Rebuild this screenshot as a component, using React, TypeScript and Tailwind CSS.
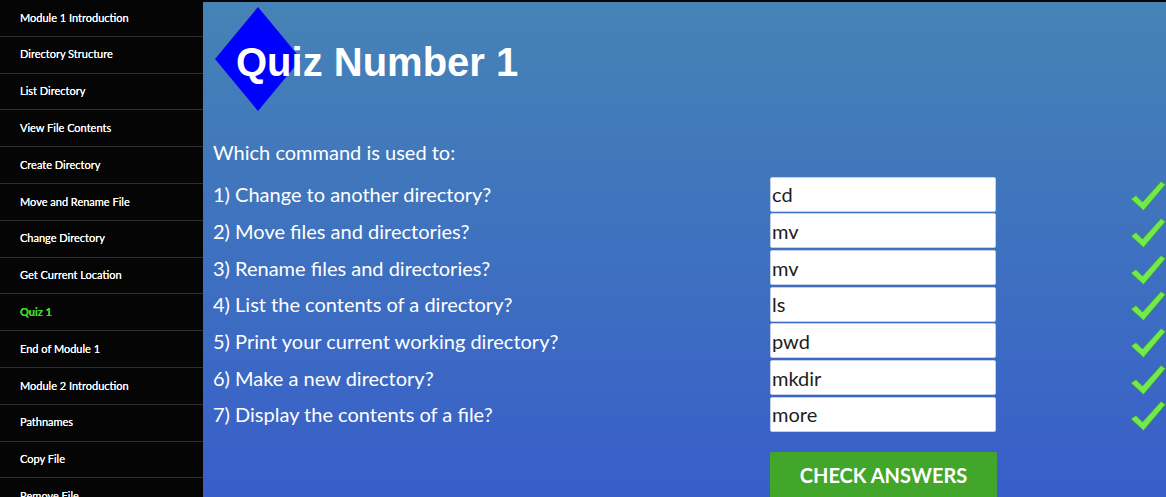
import React from 'react'

const lessons = [
  'Module 1 Introduction',
  'Directory Structure',
  'List Directory',
  'View File Contents',
  'Create Directory',
  'Move and Rename File',
  'Change Directory',
  'Get Current Location',
  'Quiz 1',
  'End of Module 1',
  'Module 2 Introduction',
  'Pathnames',
  'Copy File',
  'Remove File',
]

const questions = [
  { q: '1) Change to another directory?', a: 'cd' },
  { q: '2) Move files and directories?', a: 'mv' },
  { q: '3) Rename files and directories?', a: 'mv' },
  { q: '4) List the contents of a directory?', a: 'ls' },
  { q: '5) Print your current working directory?', a: 'pwd' },
  { q: '6) Make a new directory?', a: 'mkdir' },
  { q: '7) Display the contents of a file?', a: 'more' },
]

function Tick() {
  return (
    <svg width="36" height="32" viewBox="0 0 36 32" className="block">
      <path
        d="M1 19 L6 15.5 L12.5 22 L31 1.5 L35.5 4.5 L13.5 30.5 Z"
        fill="#72ea4e"
        stroke="#3f9a2c"
        strokeWidth="0.8"
        strokeLinejoin="round"
      />
    </svg>
  )
}

export default function App() {
  return (
    <div className="flex h-[497px] w-[1166px] overflow-hidden bg-[#050505] font-['Lato','Open_Sans',sans-serif]">
      {/* sidebar */}
      <nav className="w-[203px] shrink-0 bg-[#050505]">
        {lessons.map((l) => (
          <div
            key={l}
            className={`flex h-[36.8px] items-center border-b border-[#2f2f2f] pl-5 text-[11px] [text-shadow:0_0_0.4px_currentColor] ${
              l === 'Quiz 1' ? 'font-bold text-[#3fd82c]' : 'font-normal text-white'
            }`}
          >
            {l}
          </div>
        ))}
      </nav>

      {/* quiz area */}
      <main className="mt-[2px] flex-1 bg-gradient-to-b from-[#4683b5] to-[#395dc9] pl-[10px]">
        <div className="relative h-[128px]">
          <svg width="86" height="104" viewBox="0 0 86 104" className="absolute left-[2px] top-[5px]">
            <polygon points="43,0 86,52 43,104 0,52" fill="#0000ff" />
          </svg>
          <h1 className="relative pl-[23px] pt-[36px] font-['Liberation_Sans',Arial,sans-serif] text-[40px] font-bold leading-[48px] text-white">
            Quiz Number 1
          </h1>
        </div>

        <p className="text-[20px] leading-[44px] text-white">Which command is used to:</p>

        <div className="mt-[2px]">
          {questions.map((item) => (
            <div key={item.q} className="flex h-[36.67px] items-center">
              <span className="w-[557px] text-[20px] text-white">{item.q}</span>
              <div className="flex h-[35px] w-[226px] items-center rounded-[2px] border border-[#c5cfe6] bg-white pl-[1px] text-[20px] text-[#1e1e1e]">
                {item.a}
              </div>
              <div className="ml-[134px] mt-[4px]">
                <Tick />
              </div>
            </div>
          ))}
        </div>

        <button className="ml-[557px] mt-[19px] flex h-[48px] w-[227px] items-center justify-center rounded-[2px] bg-[#42a62b] pb-[2px] text-[20px] font-bold text-white">
          CHECK ANSWERS
        </button>
      </main>
    </div>
  )
}
